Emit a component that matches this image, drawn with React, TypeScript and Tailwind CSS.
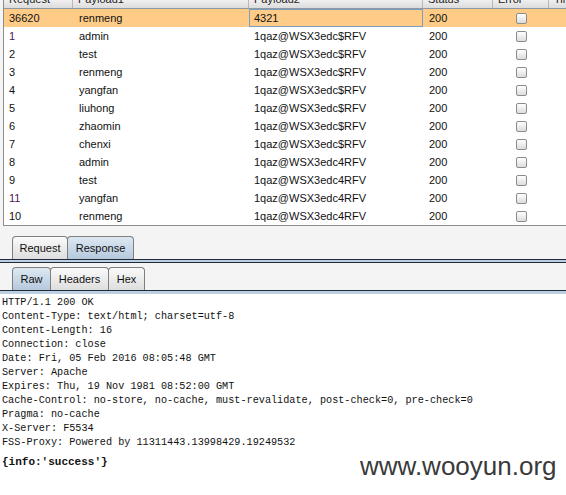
import React from "react";

type Row = { id: string; p1: string; p2: string; status: string; purple?: boolean };

const rows: Row[] = [
  { id: "36620", p1: "renmeng", p2: "4321", status: "200" },
  { id: "1", p1: "admin", p2: "1qaz@WSX3edc$RFV", status: "200", purple: true },
  { id: "2", p1: "test", p2: "1qaz@WSX3edc$RFV", status: "200" },
  { id: "3", p1: "renmeng", p2: "1qaz@WSX3edc$RFV", status: "200" },
  { id: "4", p1: "yangfan", p2: "1qaz@WSX3edc$RFV", status: "200" },
  { id: "5", p1: "liuhong", p2: "1qaz@WSX3edc$RFV", status: "200" },
  { id: "6", p1: "zhaomin", p2: "1qaz@WSX3edc$RFV", status: "200" },
  { id: "7", p1: "chenxi", p2: "1qaz@WSX3edc$RFV", status: "200" },
  { id: "8", p1: "admin", p2: "1qaz@WSX3edc4RFV", status: "200" },
  { id: "9", p1: "test", p2: "1qaz@WSX3edc4RFV", status: "200" },
  { id: "11", p1: "yangfan", p2: "1qaz@WSX3edc4RFV", status: "200", purple: true },
  { id: "10", p1: "renmeng", p2: "1qaz@WSX3edc4RFV", status: "200" },
];

const headers = ["Request", "Payload1", "Payload2", "Status", "Error", "Timeout"];

const responseLines = [
  "HTTP/1.1 200 OK",
  "Content-Type: text/html; charset=utf-8",
  "Content-Length: 16",
  "Connection: close",
  "Date: Fri, 05 Feb 2016 08:05:48 GMT",
  "Server: Apache",
  "Expires: Thu, 19 Nov 1981 08:52:00 GMT",
  "Cache-Control: no-store, no-cache, must-revalidate, post-check=0, pre-check=0",
  "Pragma: no-cache",
  "X-Server: F5534",
  "FSS-Proxy: Powered by 11311443.13998429.19249532",
];

const cols = "grid grid-cols-[69px_176px_174px_70px_56px_1fr]";

const Checkbox = () => (
  <div className="w-[11px] h-[11px] rounded-[2px] border border-[#8c8c8c] bg-gradient-to-b from-white to-[#dcdcdc]" />
);

const Tab = ({ label, active, width }: { label: string; active?: boolean; width: string }) => (
  <div
    className={`${width} h-[23px] -ml-px first:ml-0 flex items-center justify-center rounded-t-[4px] border border-b-0 border-[#7f7f7f] text-[11px] text-[#111] ${
      active ? "bg-gradient-to-b from-[#dde8f2] to-[#b5c9dd]" : "bg-gradient-to-b from-[#fafafa] to-[#dedede]"
    }`}
  >
    {label}
  </div>
);

const App = () => {
  return (
    <div className="w-[566px] h-[495px] relative overflow-hidden bg-[#f4f4f4] font-['Liberation_Sans',Arial,sans-serif]">
      {/* results table, header scrolled mostly out of view */}
      <div className="ml-[3px] h-[226px] bg-white border-l border-b border-[#8e8e8e] flex flex-col">
        <div className={`${cols} grid-rows-[8px] h-[9px] overflow-hidden border-b border-[#8d98a4] bg-gradient-to-b from-[#f0f0f0] to-[#dcdcdc]`}>
          {headers.map((h) => (
            <div key={h} className="h-[8px] border-r border-[#b8b8b8] flex items-end pl-[5px] text-[11px] text-[#222]">
              <span className="leading-[12px] mb-[3px] whitespace-nowrap">{h}</span>
            </div>
          ))}
        </div>
        {rows.map((r, i) => (
          <div
            key={r.id}
            className={`${cols} h-[18px] text-[11px] leading-[18px] ${i === 0 ? "bg-[#ffcc88] text-[#111]" : "text-[#111]"}`}
          >
            <div className={`pl-[5px] ${r.purple ? "text-[#4a1656]" : ""}`}>{r.id}</div>
            <div className="pl-[6px]">{r.p1}</div>
            <div className={i === 0 ? "pl-[4px] border border-[#7b9ebf] leading-[16px]" : "pl-[5px]"}>{r.p2}</div>
            <div className="pl-[6px]">{r.status}</div>
            <div className="flex items-center justify-center">
              <Checkbox />
            </div>
            <div />
          </div>
        ))}
      </div>

      {/* Request / Response tabs */}
      <div className="flex pl-[12px] pt-[10px]">
        <Tab label="Request" width="w-[56px]" />
        <Tab label="Response" width="w-[67px]" active />
      </div>
      <div className="h-[4px] border-y border-[#1f2b38] bg-[#bcd0e4]" />

      {/* Raw / Headers / Hex tabs */}
      <div className="flex pl-[12px] pt-[4px]">
        <Tab label="Raw" width="w-[39px]" active />
        <Tab label="Headers" width="w-[59px]" />
        <Tab label="Hex" width="w-[37px]" />
      </div>
      <div className="h-[4px] border-t border-[#1f2b38] bg-[#bcd0e4]" />

      {/* raw response */}
      <div className="bg-white h-[201px] pt-[2px] pl-[2px] font-['Liberation_Mono','Courier_New',monospace] text-[10.2px] leading-[14px] text-[#111]">
        {responseLines.map((l) => (
          <div key={l} className="whitespace-pre">
            {l}
          </div>
        ))}
        <div className="mt-[5px] font-bold text-[11px]">{"{info:'success'}"}</div>
      </div>

      {/* watermark */}
      <div className="absolute left-[360px] top-[451px] text-[26px] leading-[30px] text-[#3a3a3a] font-['Liberation_Sans',Arial,sans-serif]">
        www.wooyun.org
      </div>
    </div>
  );
};

export default App;
